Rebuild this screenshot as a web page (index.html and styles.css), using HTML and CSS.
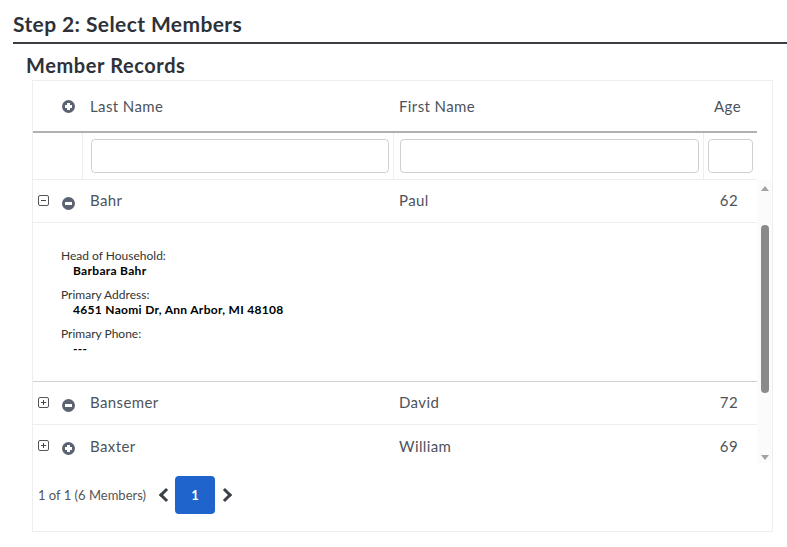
FILE: index.html
```html
<html>

<head>
    <title>
        Select Members
    </title>
    <link rel="stylesheet" href="styles.css">
</head>

<body>
    <h1 class="step">Step 2: Select Members</h1>
    <h2 class="records">Member Records</h2>
    <div class="panel">
        <div class="row head">
            <div class="cell lead"><span class="dot plus"></span></div>
            <div class="cell">Last Name</div>
            <div class="cell">First Name</div>
            <div class="cell age">Age</div>
        </div>
        <div class="row filters">
            <div class="cell lead"></div>
            <div class="cell"><input type="text"></div>
            <div class="cell"><input type="text"></div>
            <div class="cell"><input type="text"></div>
        </div>
        <div class="body">
            <div class="rows">
                <div class="row item">
                    <div class="cell lead"><span class="box minus"></span><span class="dot minus"></span></div>
                    <div class="cell">Bahr</div>
                    <div class="cell">Paul</div>
                    <div class="cell age">62</div>
                </div>
                <div class="detail">
                    <div class="label">Head of Household:</div>
                    <div class="value">Barbara Bahr</div>
                    <div class="label">Primary Address:</div>
                    <div class="value">4651 Naomi Dr, Ann Arbor, MI 48108</div>
                    <div class="label">Primary Phone:</div>
                    <div class="value">---</div>
                </div>
                <div class="row item">
                    <div class="cell lead"><span class="box plus"></span><span class="dot minus"></span></div>
                    <div class="cell">Bansemer</div>
                    <div class="cell">David</div>
                    <div class="cell age">72</div>
                </div>
                <div class="row item">
                    <div class="cell lead"><span class="box plus"></span><span class="dot plus"></span></div>
                    <div class="cell">Baxter</div>
                    <div class="cell">William</div>
                    <div class="cell age">69</div>
                </div>
            </div>
            <div class="scrollbar">
                <span class="arrow up"></span>
                <span class="thumb"></span>
                <span class="arrow down"></span>
            </div>
        </div>
        <div class="pager">
            <span class="count">1 of 1 (6 Members)</span>
            <span class="chev left"></span>
            <button class="page">1</button>
            <span class="chev right"></span>
        </div>
    </div>
</body>

</html>
```

FILE: styles.css
```css
body {
    margin: 0;
    padding: 13px 0 0 13px;
    font-family: Lato, "Open Sans", sans-serif;
    color: #4d535b;
    background: #fff;
}

.step {
    margin: 0;
    font-size: 21px;
    letter-spacing: 0.4px;
    font-weight: bold;
    color: #2e3238;
    line-height: 22px;
    padding-bottom: 7px;
    border-bottom: 2px solid #3a3d42;
}

.records {
    margin: 9px 0 0 13px;
    font-size: 20px;
    letter-spacing: 0.6px;
    font-weight: bold;
    color: #2e3238;
    line-height: 24px;
}

.panel {
    margin: 3px 0 0 19px;
    width: 739px;
    height: 450px;
    border: 1px solid #eeeeee;
}

.row {
    display: grid;
    grid-template-columns: 49px 311px 310px 54px;
    width: 724px;
    font-size: 15px;
    letter-spacing: 0.4px;
}

.cell {
    display: flex;
    align-items: center;
    padding-left: 8px;
}

.head .cell:nth-child(3),
.item .cell:nth-child(3) {
    padding-left: 6px;
}

.head {
    height: 50px;
    border-bottom: 2px solid #b0b0b0;
}

.head .lead {
    padding-left: 29px;
}

.head .age {
    justify-content: flex-end;
    padding-right: 16px;
}

.filters {
    height: 46px;
    border-bottom: 1px solid #eeeeee;
}

.filters .cell {
    border-left: 1px solid #eeeeee;
    padding: 0 4px 0 6px;
}

.filters .cell:nth-child(2) {
    padding-left: 8px;
}

.filters .cell:nth-child(4) {
    padding-left: 4px;
}

.filters .lead {
    border-left: none;
}

input[type=text] {
    width: 100%;
    height: 34px;
    border: 1px solid #d0d0d0;
    border-radius: 4px;
    box-sizing: border-box;
}

.body {
    display: flex;
    height: 283px;
    overflow: hidden;
}

.rows {
    width: 724px;
}

.item {
    height: 43px;
    border-bottom: 1px solid #eeeeee;
    box-sizing: border-box;
}

.item .cell {
    padding-bottom: 2px;
}

.item .age {
    justify-content: flex-end;
    padding-right: 19px;
}

.item .lead {
    padding-left: 5px;
    gap: 13px;
}

.dot {
    display: inline-block;
    position: relative;
    width: 13px;
    height: 13px;
    border-radius: 50%;
    background: #5b6373;
}

.item .dot {
    margin-top: 6px;
}

.dot::before,
.dot::after,
.box::before,
.box::after {
    content: "";
    position: absolute;
    background: #fff;
}

.dot::before {
    left: 3px;
    top: 5px;
    width: 7px;
    height: 3px;
}

.dot.plus::after {
    left: 5px;
    top: 3px;
    width: 3px;
    height: 7px;
}

.box {
    display: inline-block;
    position: relative;
    width: 9px;
    height: 9px;
    border: 1px solid #555;
    border-radius: 2px;
}

.box::before {
    left: 2px;
    top: 4px;
    width: 5px;
    height: 1px;
    background: #444;
}

.box.plus::after {
    left: 4px;
    top: 2px;
    width: 1px;
    height: 5px;
    background: #444;
}

.detail {
    height: 159px;
    box-sizing: border-box;
    padding: 25px 0 0 28px;
    border-bottom: 1px solid #d0d0d0;
    font-size: 12px;
    color: #333;
}

.label {
    line-height: 15px;
}

.value {
    font-weight: bold;
    letter-spacing: 0.3px;
    color: #000;
    line-height: 16px;
    padding-left: 12px;
    margin-bottom: 8px;
}

.item + .item {
    height: 44px;
}

.scrollbar {
    width: 15px;
    display: flex;
    flex-direction: column;
    align-items: center;
    background: #fbfbfb;
}

.arrow {
    width: 0;
    height: 0;
    border-left: 4px solid transparent;
    border-right: 4px solid transparent;
}

.arrow.up {
    margin-top: 6px;
    border-bottom: 5px solid #a3a3a3;
}

.arrow.down {
    margin-top: 62px;
    border-top: 5px solid #a3a3a3;
}

.thumb {
    margin-top: 34px;
    width: 8px;
    height: 168px;
    border-radius: 4px;
    background: #8a8a8a;
}

.pager {
    display: flex;
    align-items: center;
    margin-top: 13px;
    padding-left: 5px;
}

.count {
    font-size: 13px;
    color: #555;
    margin-right: 9px;
}

.chev {
    width: 7px;
    height: 7px;
    border-top: 3px solid #3b3f46;
    border-left: 3px solid #3b3f46;
}

.chev.left {
    transform: rotate(-45deg);
    margin: 0 4px 0 6px;
}

.chev.right {
    transform: rotate(135deg);
    margin-left: 5px;
}

.page {
    width: 40px;
    height: 38px;
    border: none;
    border-radius: 4px;
    background: #1f63cc;
    color: #fff;
    font-family: Lato, sans-serif;
    font-weight: bold;
    font-size: 13px;
}
```
